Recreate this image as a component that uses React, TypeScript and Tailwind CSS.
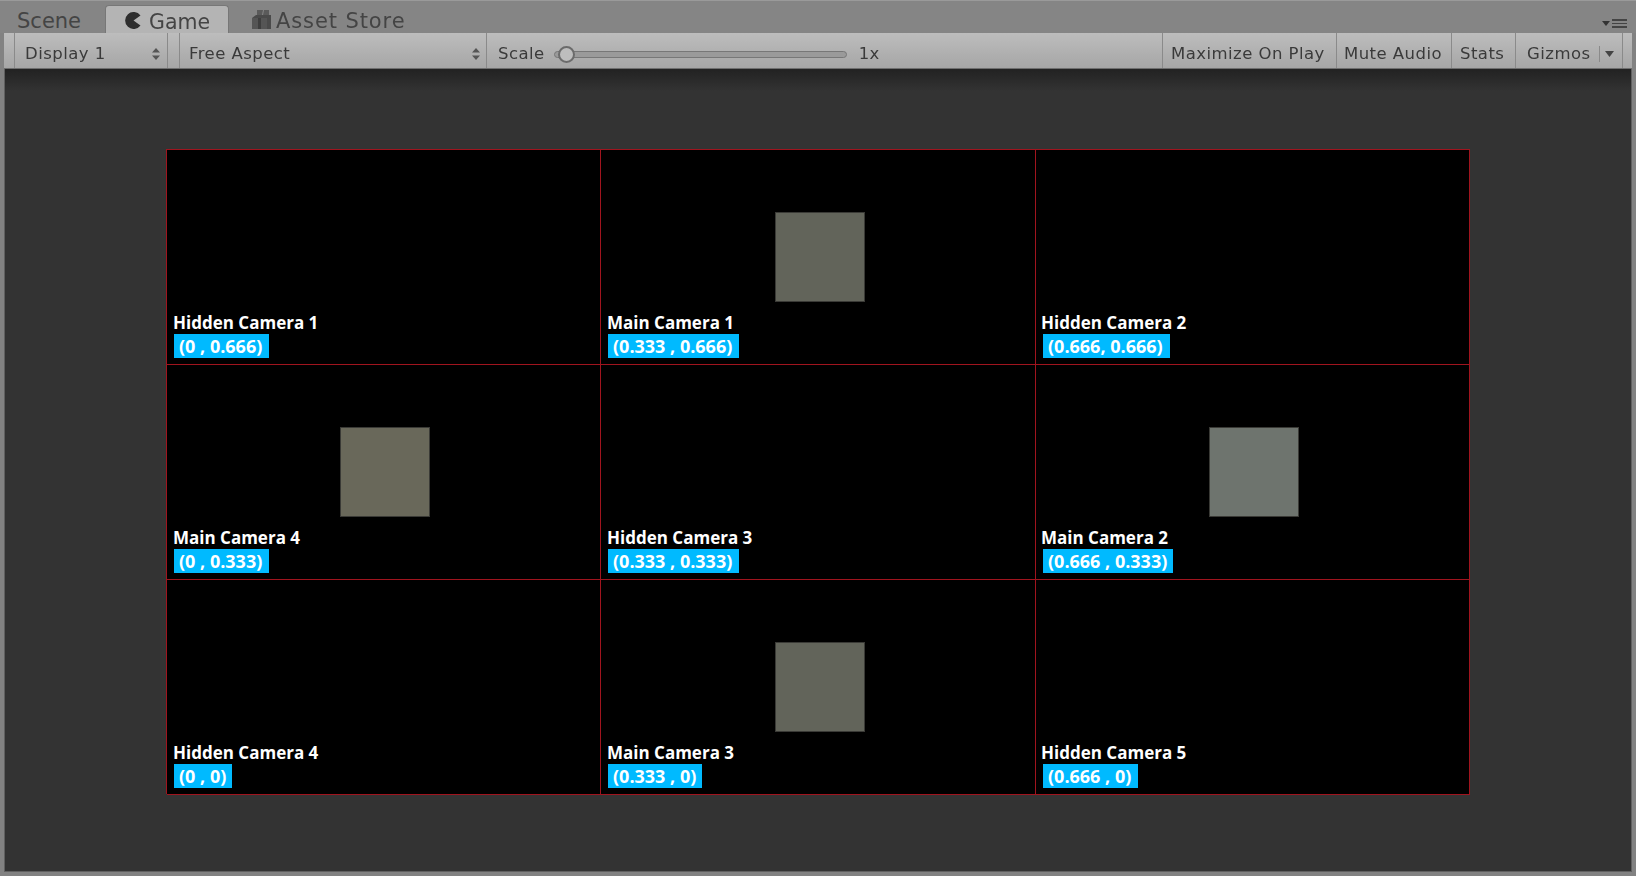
import { ReactNode } from "react";

const cells = [
  { title: "Hidden Camera 1", coords: "(0 , 0.666)", chip: "w-[95px]" },
  { title: "Main Camera 1", coords: "(0.333 , 0.666)", chip: "w-[131px]", cube: "ml-[168px] bg-[#62645a]" },
  { title: "Hidden Camera 2", coords: "(0.666, 0.666)", chip: "w-[127px]", nudge: "-ml-[1px]" },
  { title: "Main Camera 4", coords: "(0 , 0.333)", chip: "w-[95px]", cube: "ml-[167px] bg-[#69685a]" },
  { title: "Hidden Camera 3", coords: "(0.333 , 0.333)", chip: "w-[131px]" },
  { title: "Main Camera 2", coords: "(0.666 , 0.333)", chip: "w-[130px]", cube: "ml-[167px] bg-[#6e746e]", nudge: "-ml-[1px]" },
  { title: "Hidden Camera 4", coords: "(0 , 0)", chip: "w-[58px]" },
  { title: "Main Camera 3", coords: "(0.333 , 0)", chip: "w-[94px]", cube: "ml-[168px] bg-[#62645a]" },
  { title: "Hidden Camera 5", coords: "(0.666 , 0)", chip: "w-[95px]", nudge: "-ml-[1px]" },
];

function UpDown() {
  return (
    <svg width="8" height="12" viewBox="0 0 8 12" className="shrink-0">
      <path d="M4 0 L8 4.5 H0 Z M4 12 L8 7.5 H0 Z" fill="#555" />
    </svg>
  );
}

function ToolbarCell({ className, children }: { className: string; children: ReactNode }) {
  return (
    <div className={`flex items-center h-full pt-[7px] border-r border-r-[#8a8a8a] ${className}`}>
      {children}
    </div>
  );
}

function CameraCell({ title, coords, chip, cube, nudge }: (typeof cells)[number]) {
  return (
    <div className="flex flex-col border-r border-b border-[#a0141e] pl-[6px] pb-[6px] font-['Open_Sans','Noto_Sans',sans-serif] font-bold text-white">
      {cube ? (
        <div className={`self-start w-[90px] h-[90px] mt-[62px] border border-[#3a3a36] ${cube}`} />
      ) : null}
      <div className={`mt-auto translate-y-[1px] text-[17px] leading-[22px] whitespace-nowrap ${nudge ?? ""}`}>{title}</div>
      <div className={`mt-[1px] ml-[1px] h-[24px] pl-[5px] bg-[#00baff] text-[18px] leading-[24px] whitespace-nowrap ${chip}`}>
        {coords}
      </div>
    </div>
  );
}

export default function App() {
  return (
    <div className="w-[1636px] h-[876px] flex flex-col overflow-hidden bg-[#828282] font-['DejaVu_Sans',sans-serif] text-[#3a3a3a]">
      {/* tab strip */}
      <div className="h-[33px] flex items-end shrink-0 bg-[#858585] border-t border-t-[#9a9a9a] blur-[0.5px] relative">
        <div className="w-[105px] pl-[17px] h-[30px] text-[21px] leading-[36px] text-[#444]">Scene</div>
        <div className="w-[124px] h-[30px] rounded-t-[4px] bg-[#b4b4b4] border border-b-0 border-[#777] flex items-center pl-[18px] gap-[7px] text-[20.5px] leading-[34px] -mb-[2px]">
          <svg width="18" height="17" viewBox="0 0 18 17">
            <path d="M16.5 3.5 A8.5 8.5 0 1 0 16.5 13.5 L9.5 8.5 Z" fill="#2e2e2e" />
          </svg>
          <span className="text-[#444] translate-y-[1px]">Game</span>
        </div>
        <div className="h-[30px] pl-[22px] pt-[7px] flex items-center gap-[4px] text-[21px] tracking-[0.9px] text-[#444]">
          <svg width="21" height="21" viewBox="0 0 21 21" className="-translate-y-[2px]">
            <path d="M1 9 L5 6 H20 V20 H1 Z" fill="#4a4a4a" />
            <path d="M6 1 H12 L11 6 H6 Z M13 1 H18 V6 H12 Z" fill="#5a5a5a" />
            <path d="M1 9 H16 V20 H1 Z" fill="#555" />
            <path d="M7 9 H10 V20 H7 Z" fill="#3e3e3e" />
          </svg>
          <span>Asset Store</span>
        </div>
        <div className="ml-auto mr-[9px] mb-[5px] flex items-center gap-[2px]">
          <svg width="8" height="5" viewBox="0 0 8 5">
            <path d="M0 0 H8 L4 5 Z" fill="#333" />
          </svg>
          <div className="w-[15px] h-[9px] border-y-[2px] border-[#444] flex items-center">
            <div className="w-full h-[1px] bg-[#444]" />
          </div>
        </div>
      </div>

      {/* toolbar */}
      <div className="h-[36px] mx-[4px] shrink-0 flex items-center text-[16.5px] tracking-[0.45px] bg-gradient-to-b from-[#bdbdbd] to-[#a6a6a6] border-b border-b-[#6e6e6e] blur-[0.4px]">
        <ToolbarCell className="w-[11px]">{null}</ToolbarCell>
        <ToolbarCell className="w-[153px] pl-[10px] pr-[7px] justify-between">
          <span>Display 1</span>
          <UpDown />
        </ToolbarCell>
        <ToolbarCell className="w-[12px]">{null}</ToolbarCell>
        <ToolbarCell className="w-[307px] pl-[9px] pr-[6px] justify-between">
          <span>Free Aspect</span>
          <UpDown />
        </ToolbarCell>
        <ToolbarCell className="w-[676px] pl-[11px]">
          <span>Scale</span>
          <div className="relative ml-[9px] w-[293px] h-[7px] rounded-full bg-[#9a9a9a] border border-[#777]">
            <div className="absolute left-[3px] top-[-6px] w-[17px] h-[17px] rounded-full bg-[#bdbdbd] border-[2px] border-[#6b6b6b]" />
          </div>
          <span className="ml-[12px]">1x</span>
        </ToolbarCell>
        <ToolbarCell className="w-[174px] pl-[8px]">Maximize On Play</ToolbarCell>
        <ToolbarCell className="w-[115px] pl-[7px]">Mute Audio</ToolbarCell>
        <ToolbarCell className="w-[64px] pl-[8px]">Stats</ToolbarCell>
        <ToolbarCell className="w-[107px] pl-[11px]">
          <span>Gizmos</span>
          <div className="ml-[8px] h-[16px] border-l border-l-[#8a8a8a] pl-[5px] flex items-center">
            <svg width="9" height="6" viewBox="0 0 9 6">
              <path d="M0 0 H9 L4.5 6 Z" fill="#444" />
            </svg>
          </div>
        </ToolbarCell>
      </div>

      {/* game view */}
      <div className="flex-1 mx-[4px] mb-[4px] pt-[80px] pl-[161px] bg-[#333333] border-x border-b border-[#606060] relative">
        <div className="absolute inset-x-0 top-0 h-[22px] bg-gradient-to-b from-[#222222] to-[#333333]" />
        <div className="relative w-[1304px] h-[645px] grid grid-cols-[434px_435px_434px] grid-rows-[215px_215px_215px] bg-black border-t border-l border-[#a0141e]">
          {cells.map((cell) => (
            <CameraCell key={cell.title} {...cell} />
          ))}
        </div>
      </div>
    </div>
  );
}
